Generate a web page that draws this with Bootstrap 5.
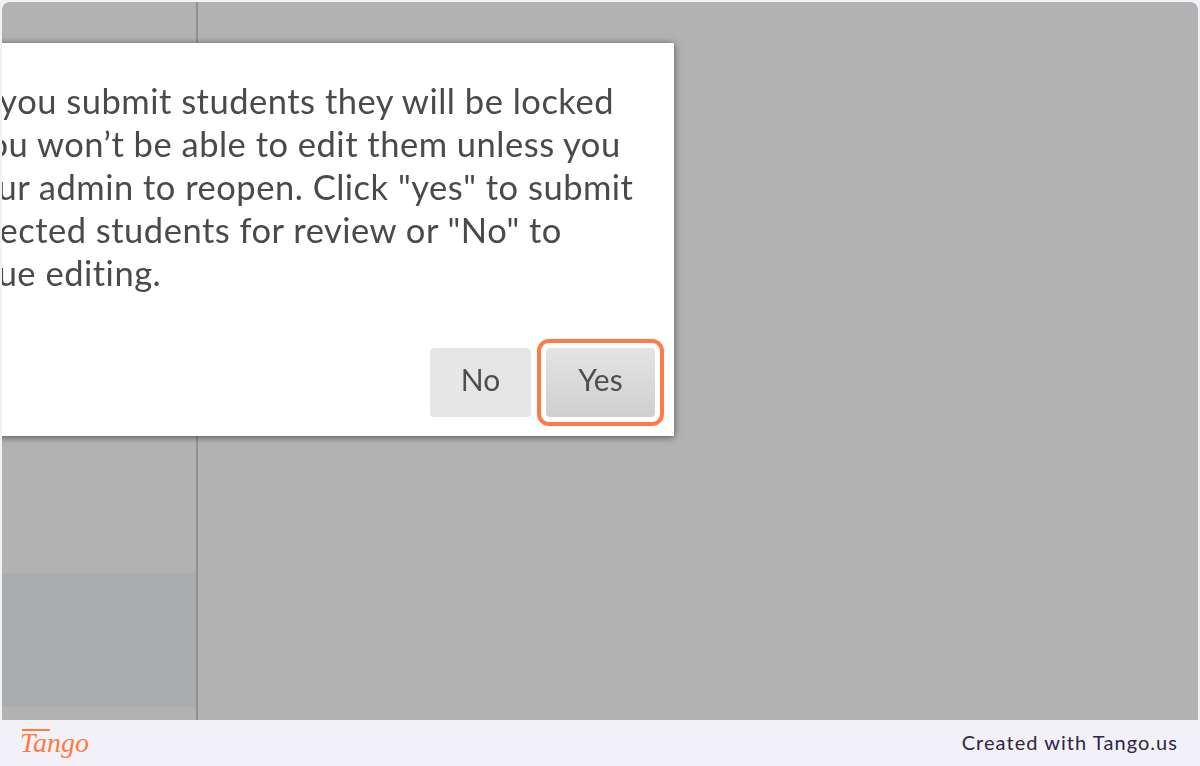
<!DOCTYPE html>
<html lang="en">
<head>
    <meta charset="UTF-8">
    <meta name="viewport" content="width=device-width, initial-scale=1.0">
    <title>Submit students</title>
    <link href="https://cdn.jsdelivr.net/npm/bootstrap@5.3.3/dist/css/bootstrap.min.css" rel="stylesheet">
    <style>
        html, body { height: 100%; }
        body { background: #f3f1f8; overflow: hidden; }
        .tela {
            margin: 2px 2px 0;
            height: 718px;
            background: #b2b2b2;
            border-radius: 8px 8px 0 0;
            overflow: hidden;
        }
        .lateral { width: 196px; border-right: 2px solid #919191; }
        .faixa { height: 134px; margin-top: 571px; background: #abacae; }
        .dialogo {
            top: 41px;
            left: -86px;
            width: 758px;
            padding: 36px 19px 19px 0;
            box-shadow: 0 1px 7px rgba(0, 0, 0, .55);
        }
        .dialogo-texto {
            font-family: Lato, sans-serif;
            font-size: 34.5px;
            letter-spacing: .5px;
            line-height: 43px;
            color: #4a4a4a;
            white-space: nowrap;
            margin-left: -16px;
            margin-bottom: 54px;
            filter: blur(.5px);
        }
        .linha-1 { margin-left: 8px; }
        .linha-2 { margin-left: 5px; }
        .linha-4 { margin-left: -4px; }
        .btn-dlg {
            height: 69px;
            font-family: Lato, sans-serif;
            font-size: 30px;
            color: #4f4f4f;
            border: 0;
            border-radius: 4px;
            background: #e6e6e6;
            padding: 0 0 6px;
            filter: blur(.4px);
        }
        .btn-no { width: 101px; }
        .btn-yes {
            width: 109px;
            background: linear-gradient(#e4e4e4, #cfcfcf);
        }
        .anel {
            border: 4px solid #ff7a45;
            border-radius: 12px;
            padding: 5px;
            margin: -9px -9px -9px 2px;
        }
        .rodape { height: 46px; padding: 0 22px 0 20px; }
        .marca {
            font-family: "Liberation Serif", serif;
            font-style: italic;
            font-size: 28px;
            color: #ff7a45;
            line-height: 1;
        }
        .marca::before {
            content: "";
            position: absolute;
            top: 0;
            left: 2px;
            width: 28px;
            height: 1.5px;
            background: #ff7a45;
        }
        .credito {
            font-family: Lato, sans-serif;
            font-size: 20px;
            letter-spacing: 1.05px;
            color: #2f2547;
            margin-top: -2px;
        }
    </style>
</head>
<body>
    <div class="tela position-relative d-flex">
        <div class="lateral flex-shrink-0">
            <div class="faixa"></div>
        </div>
        <div class="dialogo position-absolute bg-white">
            <div class="dialogo-texto">
                <div class="linha-1">Once you submit students they will be locked</div>
                <div class="linha-2">and you won’t be able to edit them unless you</div>
                <div>ask your admin to reopen. Click "yes" to submit</div>
                <div class="linha-4">the selected students for review or "No" to</div>
                <div>continue editing.</div>
            </div>
            <div class="d-flex justify-content-end align-items-center">
                <button type="button" class="btn btn-dlg btn-no me-1">No</button>
                <div class="anel">
                    <button type="button" class="btn btn-dlg btn-yes d-block">Yes</button>
                </div>
            </div>
        </div>
    </div>
    <div class="rodape d-flex align-items-center justify-content-between">
        <span class="marca position-relative">Tango</span>
        <span class="credito">Created with Tango.us</span>
    </div>
</body>
</html>
